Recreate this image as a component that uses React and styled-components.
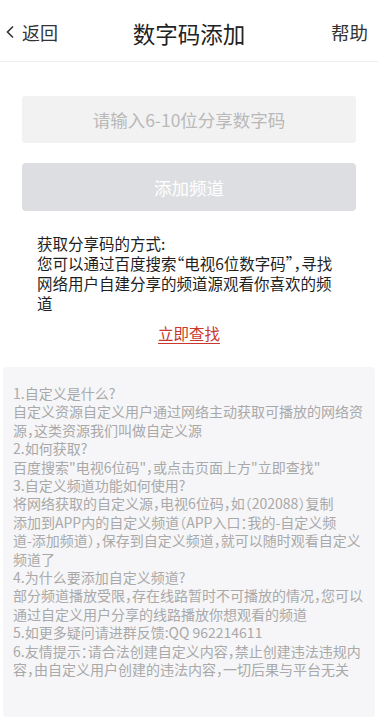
import React from 'react'
import styled, { createGlobalStyle } from 'styled-components'

const GlobalStyle = createGlobalStyle`
  html, body {
    margin: 0;
    padding: 0;
    background: #ffffff;
  }
  body {
    font-family: "Noto Sans CJK SC", "Noto Sans", sans-serif;
    color: #222;
  }
`

const Page = styled.div`
  width: 378px;
  min-height: 720px;
  display: flex;
  flex-direction: column;
  background: #fff;
`

const Header = styled.header`
  height: 61px;
  display: flex;
  align-items: center;
  justify-content: space-between;
  border-bottom: 1px solid #efefef;
  padding: 0 10px 0 5px;
  position: relative;
`

const BackLink = styled.div`
  display: flex;
  align-items: center;
  gap: 7px;
  font-size: 18px;
  color: #333;
  padding-top: 2px;
`

const Title = styled.h1`
  position: absolute;
  left: 0;
  right: 0;
  text-align: center;
  margin: 0;
  font-size: 22.5px;
  font-weight: 400;
  color: #222;
  pointer-events: none;
  padding-top: 4px;
`

const HelpLink = styled.div`
  font-size: 18.5px;
  color: #333;
  padding-top: 2px;
`

const CodeInput = styled.input`
  margin: 34px 22px 0;
  height: 47px;
  border: none;
  border-radius: 3px;
  background: #f2f2f2;
  text-align: center;
  font-family: inherit;
  font-size: 17.5px;
  outline: none;
  padding: 0;
  &::placeholder {
    color: #b9b9b9;
  }
`

const AddButton = styled.button`
  margin: 20px 22px 0;
  height: 48px;
  border: none;
  border-radius: 4px;
  background: #dcdee1;
  color: #fff;
  font-family: inherit;
  font-size: 17.5px;
`

const Info = styled.div`
  margin: 22px 0 0 37px;
  font-size: 15.5px;
  line-height: 20px;
  color: #1f1f1f;
  font-feature-settings: "halt";
`

const Line = styled.div`
  white-space: nowrap;
`

const FindLink = styled.a`
  align-self: center;
  margin-top: 10px;
  font-size: 15.5px;
  line-height: 20px;
  color: #c8382f;
  text-decoration: underline;
  text-underline-offset: 3px;
  cursor: pointer;
`

const FaqPanel = styled.section`
  margin: 24px 3px 0;
  height: 350px;
  box-sizing: border-box;
  padding: 17px 0 0 10px;
  background: #f6f6f8;
  border-radius: 4px;
  font-size: 14px;
  line-height: 18.4px;
  color: #a9a9a9;
  font-feature-settings: "halt";
`

const infoLines = [
  '获取分享码的方式:',
  '您可以通过百度搜索“电视6位数字码”，寻找',
  '网络用户自建分享的频道源观看你喜欢的频',
  '道',
]

const faqLines = [
  '1.自定义是什么?',
  '自定义资源自定义用户通过网络主动获取可播放的网络资',
  '源，这类资源我们叫做自定义源',
  '2.如何获取?',
  '百度搜索"电视6位码"，或点击页面上方"立即查找"',
  '3.自定义频道功能如何使用?',
  '将网络获取的自定义源，电视6位码，如（202088）复制',
  '添加到APP内的自定义频道（APP入口：我的-自定义频',
  '道-添加频道），保存到自定义频道，就可以随时观看自定义',
  '频道了',
  '4.为什么要添加自定义频道?',
  '部分频道播放受限，存在线路暂时不可播放的情况，您可以',
  '通过自定义用户分享的线路播放你想观看的频道',
  '5.如更多疑问请进群反馈:QQ 962214611',
  '6.友情提示：请合法创建自定义内容，禁止创建违法违规内',
  '容，由自定义用户创建的违法内容，一切后果与平台无关',
]

const ChevronLeft = () => (
  <svg width="10" height="14" viewBox="0 0 10 14">
    <path d="M8 1.5 L2.5 7 L8 12.5" fill="none" stroke="#333" strokeWidth="1.6" />
  </svg>
)

export default function App() {
  return (
    <Page>
      <GlobalStyle />
      <Header>
        <BackLink>
          <ChevronLeft />
          <span>返回</span>
        </BackLink>
        <Title>数字码添加</Title>
        <HelpLink>帮助</HelpLink>
      </Header>
      <CodeInput placeholder="请输入6-10位分享数字码" />
      <AddButton>添加频道</AddButton>
      <Info>
        {infoLines.map((l, i) => (
          <Line key={i}>{l}</Line>
        ))}
      </Info>
      <FindLink>立即查找</FindLink>
      <FaqPanel>
        {faqLines.map((l, i) => (
          <Line key={i}>{l}</Line>
        ))}
      </FaqPanel>
    </Page>
  )
}
